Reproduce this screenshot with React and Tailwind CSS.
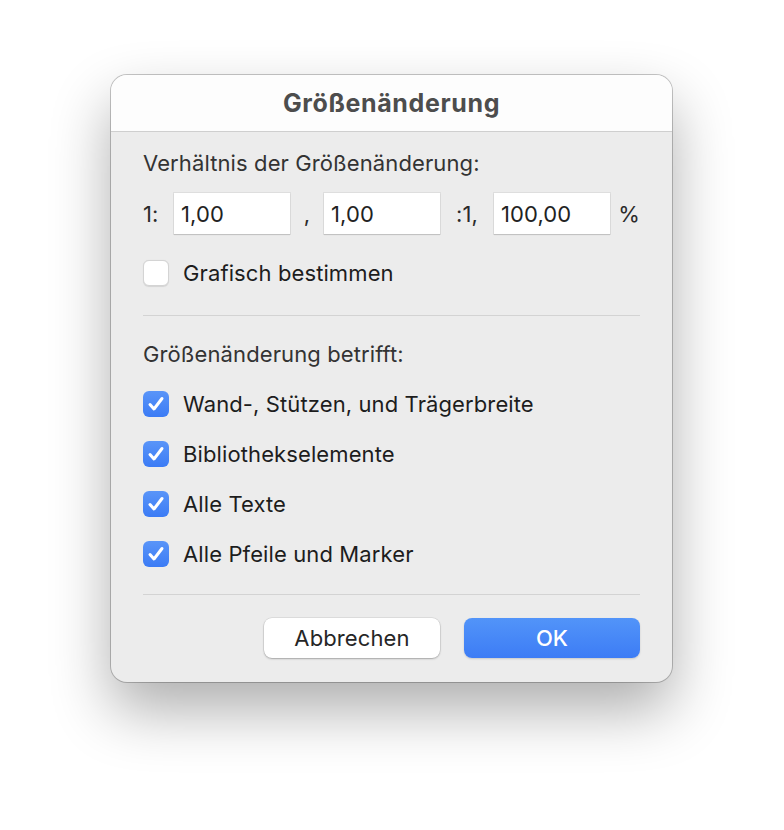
import React from 'react';

const font = { fontFamily: 'Inter, "Noto Sans", sans-serif' };

function Check({ checked }) {
    if (!checked) {
        return (
            <span className="w-[26px] h-[26px] rounded-[6px] bg-white border border-[#d4d4d4] shadow-[0_0.5px_1px_rgba(0,0,0,0.1)] flex-shrink-0" />
        );
    }
    return (
        <span className="w-[26px] h-[26px] rounded-[6px] bg-gradient-to-b from-[#5a95f8] to-[#3b7bf5] flex items-center justify-center flex-shrink-0">
            <svg width="20" height="20" viewBox="0 0 20 20" fill="none">
                <path d="M4 10.5 L8 15 L16 4.5" stroke="white" strokeWidth="3" strokeLinecap="round" strokeLinejoin="round" />
            </svg>
        </span>
    );
}

function Field({ value }) {
    return (
        <div className="w-[116px] h-[41px] bg-white shadow-[0_0_0_1px_rgba(0,0,0,0.06),0_1px_1px_rgba(0,0,0,0.12)] flex items-center px-[7px] text-[22px] leading-none text-[#222]">
            {value}
        </div>
    );
}

export default function App() {
    const options = [
        'Wand-, Stützen, und Trägerbreite',
        'Bibliothekselemente',
        'Alle Texte',
        'Alle Pfeile und Marker',
    ];

    return (
        <div className="w-[784px] h-[830px] bg-white pl-[111px] pt-[75px]" style={font}>
            <div className="w-[561px] h-[607px] rounded-[16px] bg-[#ececec] overflow-hidden shadow-[0_0_0_1px_rgba(0,0,0,0.22),0_28px_60px_rgba(0,0,0,0.32)] flex flex-col">
                <div className="h-[57px] bg-[#fdfdfd] border-b border-[#cfcfcf] flex items-center justify-center">
                    <span className="text-[25px] leading-none font-bold text-[#4d4d4d] tracking-[0.025em]">Größenänderung</span>
                </div>
                <div className="px-[32px] pt-[18px] flex flex-col text-[22px] leading-none tracking-[0.005em] text-[#2a2a2a]">
                    <div className="h-[26px] flex items-center text-[#333]">Verhältnis der Größenänderung:</div>
                    <div className="mt-[17px] flex items-center">
                        <span className="w-[31px]">1:</span>
                        <Field value="1,00" />
                        <span className="w-[34px] text-center">,</span>
                        <Field value="1,00" />
                        <span className="w-[54px] text-center">:1,</span>
                        <Field value="100,00" />
                        <span className="ml-auto">%</span>
                    </div>
                    <div className="mt-[26px] flex items-center gap-[14px]">
                        <Check checked={false} />
                        <span className="text-[#1d1d1d]">Grafisch bestimmen</span>
                    </div>
                    <div className="mt-[29px] h-px bg-[#d3d3d3]" />
                    <div className="mt-[25px] h-[26px] flex items-center text-[#333]">Größenänderung betrifft:</div>
                    <div className="mt-[24px] flex flex-col gap-[24px]">
                        {options.map((label) => (
                            <div key={label} className="h-[26px] flex items-center gap-[14px]">
                                <Check checked />
                                <span className="text-[#1d1d1d]">{label}</span>
                            </div>
                        ))}
                    </div>
                    <div className="mt-[27px] h-px bg-[#d3d3d3]" />
                    <div className="mt-[23px] flex justify-end gap-[24px]">
                        <button className="w-[176px] h-[40px] rounded-[8px] bg-white text-[22px] leading-none text-[#262626] shadow-[0_0_0_0.5px_rgba(0,0,0,0.12),0_1px_2px_rgba(0,0,0,0.25)]">
                            Abbrechen
                        </button>
                        <button className="w-[176px] h-[40px] rounded-[8px] bg-gradient-to-b from-[#5294f9] to-[#3d7cf5] text-[22px] leading-none font-medium text-white shadow-[0_1px_2px_rgba(0,0,0,0.15)]">
                            OK
                        </button>
                    </div>
                </div>
            </div>
        </div>
    );
}
